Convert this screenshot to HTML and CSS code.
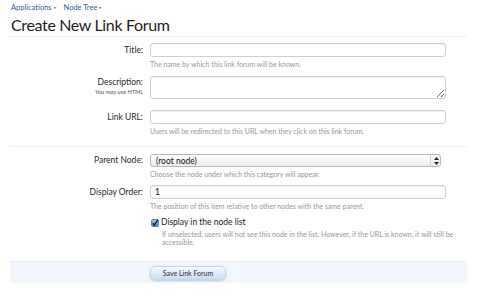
FILE: index.html
```html
<!DOCTYPE html>
<html>
<head>
<meta charset="utf-8">
<link rel="stylesheet" href="styles.css">
</head>
<body>
<div class="page">
  <nav class="crumbs">
    <a class="crumb" href="#">Applications <span class="arrow">&#9656;</span></a>
    <a class="crumb" href="#">Node Tree <span class="arrow">&#9656;</span></a>
  </nav>
  <h1 class="title">Create New Link Forum</h1>

  <form class="form">
    <div class="row row-title">
      <div class="label"><span class="lab">Title:</span></div>
      <div class="ctrl">
        <input class="text" type="text">
        <p class="hint">The name by which this link forum will be known.</p>
      </div>
    </div>

    <div class="row row-desc">
      <div class="label label-desc"><span class="lab">Description:</span><span class="sub">You may use HTML</span></div>
      <div class="ctrl">
        <textarea class="area"></textarea>
      </div>
    </div>

    <div class="row row-url">
      <div class="label"><span class="lab">Link URL:</span></div>
      <div class="ctrl">
        <input class="text" type="text">
        <p class="hint">Users will be redirected to this URL when they click on this link forum.</p>
      </div>
    </div>

    <hr class="sep">

    <div class="row row-parent">
      <div class="label label-sel"><span class="lab">Parent Node:</span></div>
      <div class="ctrl">
        <div class="selwrap">
          <select class="sel"><option>(root node)</option></select>
          <span class="selarrows"><svg width="5" height="8" viewBox="0 0 5 8"><polygon points="2.5,0 5,3 0,3" fill="#222"/><polygon points="0,5 5,5 2.5,8" fill="#222"/></svg></span>
        </div>
        <p class="hint">Choose the node under which this category will appear.</p>
      </div>
    </div>

    <div class="row row-order">
      <div class="label"><span class="lab">Display Order:</span></div>
      <div class="ctrl">
        <input class="text" type="text" value="1">
        <p class="hint">The position of this item relative to other nodes with the same parent.</p>
      </div>
    </div>

    <div class="row row-check">
      <div class="label"></div>
      <div class="ctrl">
        <label class="check">
          <span class="box"><svg width="8" height="8" viewBox="0 0 8 8"><defs><linearGradient id="g" x1="0" y1="0" x2="0" y2="1"><stop offset="0" stop-color="#a9cdf2"/><stop offset="1" stop-color="#3f86d6"/></linearGradient></defs><rect x="0.5" y="0.5" width="7" height="7" rx="1.5" fill="url(#g)" stroke="#4a6f9c" stroke-width="0.8"/><path d="M1.8 4.2 L3.4 6.1 L6.9 0.6" fill="none" stroke="#10233f" stroke-width="1.4"/></svg></span>
          <span class="checktext">Display in the node list</span>
        </label>
        <p class="checkhint">If unselected, users will not see this node in the list. However, if the URL is known, it will still be accessible.</p>
      </div>
    </div>

    <div class="footer">
      <div class="label"></div>
      <div class="ctrl">
        <button class="btn" type="button">Save Link Forum</button>
      </div>
    </div>
  </form>
</div>
</body>
</html>
```
FILE: styles.css
```css
html, body {
  margin: 0;
  padding: 0;
  background: #ffffff;
}
body {
  font-family: Lato, "Liberation Sans", Arial, sans-serif;
  color: #222;
}
.page {
  padding: 0 10px;
}
.crumbs {
  display: flex;
  gap: 7px;
  padding: 3px 0 0 1px;
  height: 9px;
  font-size: 7.5px;
  line-height: 9px;
}
.crumb {
  color: #2b5f93;
  text-decoration: none;
}
.arrow {
  font-size: 5px;
  color: #6a8db0;
  position: relative;
  top: -1px;
}
.title {
  margin: 0;
  padding: 3px 0 0 1px;
  font-size: 16px;
  letter-spacing: -0.35px;
  line-height: 20px;
  font-weight: normal;
  color: #1e1e1e;
  height: 21px;
  border-bottom: 1px solid #eef1f4;
}
.form {
  margin: 0;
  padding-top: 6px;
}
.row {
  display: flex;
  gap: 7px;
}
.label {
  width: 133px;
  flex: none;
  text-align: right;
  display: flex;
  flex-direction: column;
  align-items: flex-end;
}
.lab {
  font-size: 8.5px;
  line-height: 14px;
  color: #2a2a2a;
}
.sub {
  font-size: 6px;
  line-height: 8px;
  font-style: italic;
  color: #555;
}
.label-desc .lab {
  line-height: 12px;
}
.ctrl {
  flex: 1;
  min-width: 0;
}
.text, .area {
  display: block;
  box-sizing: border-box;
  width: 296px;
  height: 14px;
  margin: 0;
  border: 1px solid #cfcfcf;
  border-radius: 3px;
  background: #fff;
  box-shadow: inset 0 1px 1px rgba(0,0,0,0.06);
  font-family: Lato, "Liberation Sans", Arial, sans-serif;
  font-size: 8.5px;
  padding: 0 4px;
  color: #111;
  outline: none;
}
.area {
  height: 23px;
  resize: vertical;
}
.hint {
  margin: 3px 0 0;
  font-size: 7px;
  line-height: 9px;
  color: #979797;
}
.row-title { margin-bottom: 7px; }
.row-desc { margin-bottom: 11px; }
.row-url { margin-bottom: 0; }
.sep {
  margin: 10px 0 7px;
  border: 0;
  border-top: 1px solid #eef1f4;
  height: 0;
}
.row-parent { margin-bottom: 6px; }
.label-sel .lab { line-height: 13px; }
.selwrap {
  position: relative;
  width: 291px;
}
.sel {
  display: block;
  box-sizing: border-box;
  width: 291px;
  height: 13px;
  margin: 0;
  -webkit-appearance: none;
  appearance: none;
  border: 1px solid #b9b9b9;
  border-radius: 3px;
  background: linear-gradient(#ffffff, #ececec);
  font-family: Lato, "Liberation Sans", Arial, sans-serif;
  font-size: 8.5px;
  padding: 0 5px;
  color: #111;
  outline: none;
}
.selarrows {
  position: absolute;
  right: 0;
  top: 0;
  width: 10px;
  height: 13px;
  border-left: 1px solid #d2d2d2;
  display: flex;
  align-items: center;
  justify-content: center;
}
.row-order { margin-bottom: 6px; }
.check {
  display: flex;
  align-items: center;
  gap: 2px;
  height: 11px;
  padding-left: 1px;
}
.box {
  display: flex;
  width: 8px;
  height: 8px;
  align-items: center;
}
.checktext {
  font-size: 8.5px;
  line-height: 11px;
  color: #222;
}
.checkhint {
  margin: 2px 0 0 12px;
  font-size: 7px;
  line-height: 8px;
  color: #979797;
  width: 298px;
}
.footer {
  display: flex;
  gap: 7px;
  margin-top: 15px;
  padding: 4px 0 3px;
  background: #f1f7fc;
  border-top: 1px solid #e6eff7;
}
.btn {
  display: block;
  width: 76px;
  height: 14px;
  margin: 0;
  padding: 0;
  border: 1px solid #c3d5e6;
  border-radius: 5px;
  background: linear-gradient(#f7fbfe, #c9ddef);
  box-shadow: 0 1px 2px rgba(80,110,140,0.35);
  font-family: Lato, "Liberation Sans", Arial, sans-serif;
  font-size: 7px;
  color: #1c2b3a;
}
```
